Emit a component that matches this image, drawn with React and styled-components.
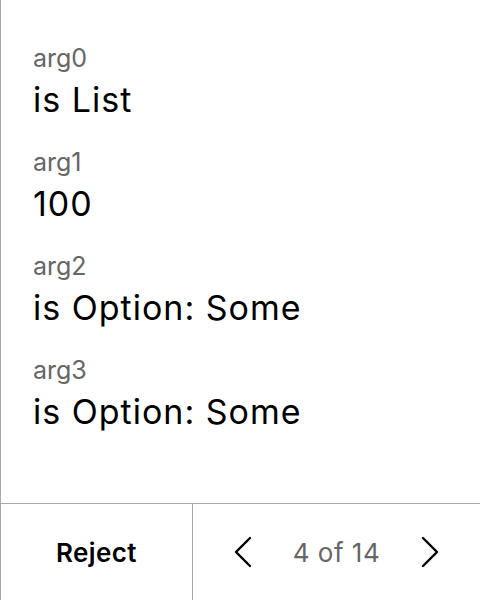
import React from 'react'
import styled, { createGlobalStyle } from 'styled-components'

const GlobalStyle = createGlobalStyle`
  html, body, #root {
    margin: 0;
    height: 100%;
  }
  body {
    font-family: Inter, "Noto Sans", sans-serif;
    background: #fff;
    color: #000;
  }
`

const Panel = styled.div`
  display: flex;
  flex-direction: column;
  height: 100%;
  box-sizing: border-box;
  border-left: 1px solid #aaa;
`

const ArgList = styled.div`
  flex: 1;
  display: flex;
  flex-direction: column;
  gap: 20px;
  padding: 40px 32px 0;
`

const Arg = styled.div`
  display: flex;
  flex-direction: column;
`

const Label = styled.div`
  font-size: 25px;
  line-height: 36px;
  color: #666;
`

const Value = styled.div`
  font-size: 34px;
  line-height: 48px;
  letter-spacing: 1px;
  color: #000;
`

const Footer = styled.div`
  display: grid;
  grid-template-columns: 192px 1fr;
  height: 96px;
  border-top: 1px solid #aaa;
`

const RejectButton = styled.button`
  border: none;
  border-right: 1px solid #aaa;
  background: none;
  font-family: inherit;
  font-size: 26px;
  font-weight: 600;
  letter-spacing: 0.4px;
  color: #000;
  padding: 0;
`

const Pager = styled.div`
  display: flex;
  align-items: center;
  justify-content: center;
  gap: 30px;
`

const Arrow = styled.button`
  display: flex;
  align-items: center;
  justify-content: center;
  width: 40px;
  height: 48px;
  border: none;
  background: none;
  padding: 0;
  color: #000;
`

const Count = styled.span`
  font-size: 26px;
  letter-spacing: 0.5px;
  color: #666;
`

const Chevron = ({ dir }) => (
  <svg width="18" height="32" viewBox="0 0 18 32" fill="none" stroke="currentColor" strokeWidth="2.4" strokeLinecap="round" strokeLinejoin="round">
    {dir === 'left' ? <path d="M16 2 L2 16 L16 30" /> : <path d="M2 2 L16 16 L2 30" />}
  </svg>
)

const args = [
  ['arg0', 'is List'],
  ['arg1', '100'],
  ['arg2', 'is Option: Some'],
  ['arg3', 'is Option: Some'],
]

const App = () => (
  <>
    <GlobalStyle />
    <Panel>
      <ArgList>
        {args.map(([name, value]) => (
          <Arg key={name}>
            <Label>{name}</Label>
            <Value>{value}</Value>
          </Arg>
        ))}
      </ArgList>
      <Footer>
        <RejectButton>Reject</RejectButton>
        <Pager>
          <Arrow aria-label="previous"><Chevron dir="left" /></Arrow>
          <Count>4 of 14</Count>
          <Arrow aria-label="next"><Chevron dir="right" /></Arrow>
        </Pager>
      </Footer>
    </Panel>
  </>
)

export default App
